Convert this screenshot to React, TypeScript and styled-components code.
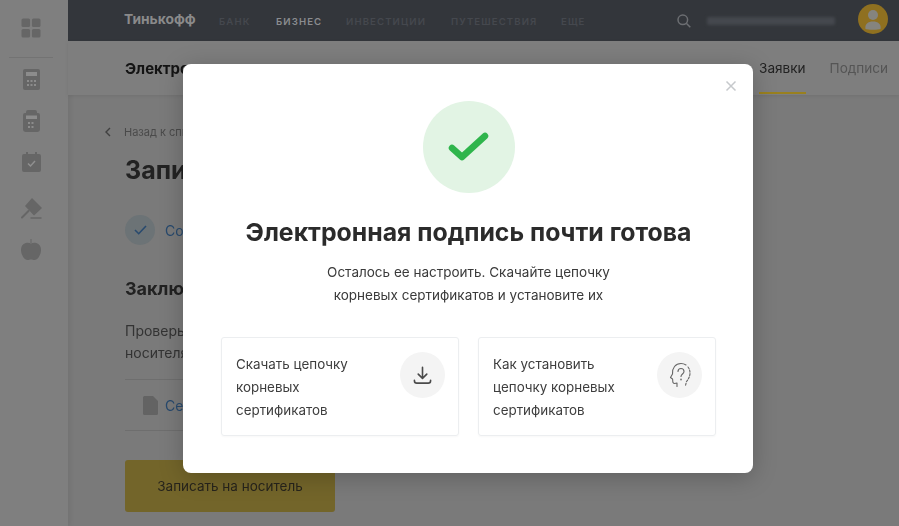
import React from 'react';
import styled, { createGlobalStyle } from 'styled-components';

const Global = createGlobalStyle`
  html, body { margin: 0; padding: 0; width: 100%; height: 100%; overflow: hidden; background: #7a7a7a; }
  #root { width: 100%; height: 100%; }
  * { box-sizing: border-box; }
`;

const Screen = styled.div`
  position: relative;
  width: 899px;
  height: 526px;
  overflow: hidden;
  font-family: Inter, "Liberation Sans", sans-serif;
`;

const Page = styled.div`
  display: flex;
  width: 899px;
  height: 526px;
  background: #7a7a7a;
  filter: blur(0.6px);
`;

const Sidebar = styled.aside`
  width: 68px;
  flex: none;
  background: #7f7f7f;
  box-shadow: 2px 0 5px rgba(0, 0, 0, 0.07);
  display: flex;
  flex-direction: column;
  align-items: center;
  padding: 18px 6px 0 0;
  color: #666;
`;

const SideSlot = styled.div<{ $h: number }>`
  height: ${(p) => p.$h}px;
  width: 100%;
  display: flex;
  align-items: center;
  justify-content: center;
  flex: none;
`;

const SideDivider = styled.hr`
  width: 44px;
  height: 1px;
  margin: 19px 0 1px;
  border: 0;
  background: #737373;
  flex: none;
`;

const Main = styled.div`
  flex: 1;
  min-width: 0;
  display: flex;
  flex-direction: column;
`;

const TopBar = styled.header`
  height: 41px;
  flex: none;
  background: #33363b;
  display: flex;
  align-items: center;
  padding: 0 11px 0 56px;
`;

const Brand = styled.span`
  font-size: 13.8px;
  font-weight: 700;
  color: #8a8a8a;
  width: 95px;
  flex: none;
  margin-top: -3px;
`;

const NavItem = styled.span<{ $active?: boolean; $w: number }>`
  font-size: 9.6px;
  font-weight: 600;
  letter-spacing: 1.1px;
  margin-top: 1px;
  color: ${(p) => (p.$active ? '#8a8c8f' : '#45484e')};
  width: ${(p) => p.$w}px;
  flex: none;
  white-space: nowrap;
`;

const TopRight = styled.div`
  margin-left: auto;
  display: flex;
  align-items: center;
  gap: 16px;
`;

const Blurred = styled.div`
  width: 128px;
  height: 8px;
  border-radius: 2px;
  background: #45484e;
  filter: blur(1.5px);
`;

const Avatar = styled.div`
  width: 30px;
  height: 30px;
  border-radius: 50%;
  background: #8f7020;
  display: flex;
  align-items: center;
  justify-content: center;
  margin: 0 0 3px 7px;
  overflow: hidden;
`;

const SubBar = styled.div`
  height: 54px;
  flex: none;
  background: #7e7e7e;
  box-shadow: 0 1px 4px rgba(0, 0, 0, 0.08);
  display: flex;
  align-items: stretch;
  justify-content: space-between;
  padding: 0 11px 0 57px;
`;

const SubTitle = styled.div`
  font-size: 15px;
  font-weight: 700;
  color: #141414;
  padding-top: 18px;
`;

const Tabs = styled.nav`
  display: flex;
  gap: 24px;
`;

const Tab = styled.div<{ $active?: boolean }>`
  font-size: 13.55px;
  padding-top: 19px;
  color: ${(p) => (p.$active ? '#222' : '#555')};
  border-bottom: 2px solid ${(p) => (p.$active ? '#99801f' : 'transparent')};
  height: 53px;
`;

const Content = styled.div`
  padding: 29px 0 0 57px;
  display: flex;
  flex-direction: column;
  align-items: flex-start;
`;

const Back = styled.div`
  display: flex;
  align-items: center;
  gap: 13px;
  margin-left: -20px;
  height: 16px;
  font-size: 11px;
  color: #4a4a4a;
`;

const H1 = styled.h1`
  margin: 13px 0 0;
  font-size: 25px;
  line-height: 34px;
  font-weight: 700;
  color: #222;
`;

const Step = styled.div`
  display: flex;
  align-items: center;
  gap: 10px;
  margin-top: 28px;
  font-size: 14px;
  color: #284a6e;
`;

const StepCircle = styled.div`
  width: 30px;
  height: 30px;
  border-radius: 50%;
  background: #6c7376;
  display: flex;
  align-items: center;
  justify-content: center;
`;

const H2 = styled.h2`
  margin: 31px 0 0;
  font-size: 18px;
  line-height: 26px;
  font-weight: 700;
  color: #222;
`;

const Para = styled.p`
  margin: 18px 0 0;
  font-size: 14px;
  line-height: 22px;
  color: #333;
`;

const FileRow = styled.div`
  width: 250px;
  height: 52px;
  margin-top: 15px;
  border-top: 1px solid #6e6e6e;
  border-bottom: 1px solid #6e6e6e;
  display: flex;
  align-items: center;
  gap: 7px;
  padding-left: 18px;
  font-size: 14px;
  color: #284a6e;
`;

const PrimaryButton = styled.div`
  width: 210px;
  height: 52px;
  margin-top: 29px;
  border-radius: 3px;
  background: #73652a;
  display: flex;
  align-items: center;
  justify-content: center;
  font-size: 13.5px;
  color: #27241c;
`;

const Modal = styled.div`
  position: absolute;
  left: 183px;
  top: 64px;
  width: 570px;
  height: 409px;
  border-radius: 8px;
  background: #fff;
  box-shadow: 0 4px 24px rgba(0, 0, 0, 0.22);
  display: flex;
  flex-direction: column;
  align-items: center;
  padding: 37px 37px 0 38px;
  filter: blur(0.25px);
`;

const Close = styled.div`
  position: absolute;
  top: 15px;
  right: 15px;
  width: 14px;
  height: 14px;
  display: flex;
`;

const SuccessCircle = styled.div`
  width: 92px;
  height: 92px;
  border-radius: 50%;
  background: #e2f4e4;
  display: flex;
  align-items: center;
  justify-content: center;
  flex: none;
`;

const Title = styled.h2`
  margin: 22px 0 0;
  font-size: 24.8px;
  line-height: 34px;
  font-weight: 700;
  color: #2b2b2b;
  white-space: nowrap;
`;

const Lead = styled.p`
  margin: 12px 0 0;
  font-size: 13.5px;
  line-height: 23px;
  color: #3a3a3a;
  text-align: center;
`;

const Cards = styled.div`
  display: flex;
  gap: 19px;
  margin-top: 30px;
  width: 100%;
`;

const Card = styled.div`
  flex: 1;
  height: 99px;
  border-radius: 3px;
  border: 1px solid #eceef0;
  box-shadow: 0 1px 2px rgba(0, 0, 0, 0.03);
  display: flex;
  justify-content: space-between;
  padding: 15px 13px 0 14px;
`;

const CardText = styled.div`
  font-size: 13.4px;
  line-height: 23px;
  color: #3d3d3d;
`;

const CardIcon = styled.div`
  width: 45px;
  height: 46px;
  margin-top: -1px;
  border-radius: 50%;
  background: #f4f4f4;
  display: flex;
  align-items: center;
  justify-content: center;
  flex: none;
`;

const Ico = styled.svg`
  display: block;
  flex: none;
`;

export default function App() {
  return (
    <Screen>
      <Global />
      <Page>
        <Sidebar>
          <SideSlot $h={20}>
            <Ico width="20" height="20" viewBox="0 0 20 20" fill="currentColor">
              <rect x="0.5" y="0.5" width="8.6" height="8.6" rx="1.6" />
              <rect x="10.9" y="0.5" width="8.6" height="8.6" rx="1.6" />
              <rect x="0.5" y="10.9" width="8.6" height="8.6" rx="1.6" />
              <rect x="10.9" y="10.9" width="8.6" height="8.6" rx="1.6" />
            </Ico>
          </SideSlot>
          <SideDivider />
          <SideSlot $h={41}>
            <Ico width="17" height="21" viewBox="0 0 17 21">
              <rect width="17" height="21" rx="2" fill="currentColor" />
              <rect x="3" y="3" width="11" height="4" fill="#8c8c8c" />
              <g fill="#8c8c8c">
                <rect x="4" y="11" width="2" height="2" /><rect x="7.5" y="11" width="2" height="2" /><rect x="11" y="11" width="2" height="2" />
                <rect x="4" y="15" width="2" height="2" /><rect x="7.5" y="15" width="2" height="2" /><rect x="11" y="15" width="2" height="2" />
              </g>
            </Ico>
          </SideSlot>
          <SideSlot $h={41}>
            <Ico width="17" height="23" viewBox="0 0 17 23">
              <path d="M3 3a2 2 0 0 1 2-2h7a2 2 0 0 1 2 2v1h1a2 2 0 0 1 2 2v14a3 3 0 0 1-3 3H3a3 3 0 0 1-3-3V6a2 2 0 0 1 2-2h1z" fill="currentColor" />
              <rect x="3" y="6.5" width="11" height="3.5" fill="#8c8c8c" />
              <g fill="#8c8c8c">
                <rect x="5" y="13" width="2" height="2" /><rect x="8.500" y="13" width="2" height="2" />
                <rect x="5" y="17" width="2" height="2" /><rect x="8.500" y="17" width="2" height="2" />
              </g>
            </Ico>
          </SideSlot>
          <SideSlot $h={41}>
            <Ico width="19" height="20" viewBox="0 0 19 20">
              <path d="M2 2h2V0h2v2h7V0h2v2h2a2 2 0 0 1 2 2v14a2 2 0 0 1-2 2H2a2 2 0 0 1-2-2V4a2 2 0 0 1 2-2z" fill="currentColor" />
              <path d="M6 11.500l2.500 2.500 4.500-5" fill="none" stroke="#909090" strokeWidth="1.500" />
            </Ico>
          </SideSlot>
          <SideSlot $h={53}>
            <Ico width="21" height="21" viewBox="0 0 21 21">
              <path d="M11 0L21 10 13 17.500 4 8z" fill="currentColor" />
              <path d="M1 19.500L7.500 13" stroke="currentColor" strokeWidth="2" strokeLinecap="round" />
              <path d="M9.500 20h11" stroke="currentColor" strokeWidth="1.500" />
            </Ico>
          </SideSlot>
          <SideSlot $h={29}>
            <Ico width="20" height="21" viewBox="0 0 20 21" fill="currentColor">
              <path d="M10 4.500C7 2.800 0 3.500 0 11c0 5 3.500 10 6.500 10 1.500 0 2.300-.6 3.500-.6s2 .6 3.500.6C16.500 21 20 16 20 11c0-7.500-7-8.200-10-6.500z" />
              <path d="M9.500 4V0h1v4z" />
            </Ico>
          </SideSlot>
        </Sidebar>
        <Main>
          <TopBar>
            <Brand>Тинькофф</Brand>
            <NavItem $w={57}>БАНК</NavItem>
            <NavItem $w={70} $active>БИЗНЕС</NavItem>
            <NavItem $w={105}>ИНВЕСТИЦИИ</NavItem>
            <NavItem $w={110}>ПУТЕШЕСТВИЯ</NavItem>
            <NavItem $w={30}>ЕЩЕ</NavItem>
            <TopRight>
              <Ico width="14" height="14" viewBox="0 0 14 14" fill="none" stroke="#6c6e72" strokeWidth="1.500">
                <circle cx="5.800" cy="5.800" r="4.800" />
                <path d="M9.300 9.300l4 4" />
              </Ico>
              <Blurred />
              <Avatar>
                <Ico width="30" height="30" viewBox="0 0 30 30" fill="#85847e">
                  <circle cx="15" cy="11" r="5" />
                  <path d="M7.500 25c-1-5 2.500-7.500 7.500-7.500s8.500 2.500 7.500 7.500c-2 1-13 1-15 0z" />
                </Ico>
              </Avatar>
            </TopRight>
          </TopBar>
          <SubBar>
            <SubTitle>Электронная подпись</SubTitle>
            <Tabs>
              <Tab $active>Заявки</Tab>
              <Tab>Подписи</Tab>
            </Tabs>
          </SubBar>
          <Content>
            <Back>
              <Ico width="6" height="10" viewBox="0 0 6 10" fill="none" stroke="#404040" strokeWidth="1.400">
                <path d="M5 1L1 5l4 4" />
              </Ico>
              Назад к списку
            </Back>
            <H1>Запись подписи</H1>
            <Step>
              <StepCircle>
                <Ico width="13" height="10" viewBox="0 0 13 10" fill="none" stroke="#284a6e" strokeWidth="1.600">
                  <path d="M1 5l3.700 3.700L12 1" />
                </Ico>
              </StepCircle>
              Создание заявки
            </Step>
            <H2>Заключение</H2>
            <Para>
              Проверьте данные
              <br />
              носителя подписи
            </Para>
            <FileRow>
              <Ico width="15" height="19" viewBox="0 0 15 19">
                <path d="M1.500 0H10l5 5v12.500a1.500 1.500 0 0 1-1.500 1.500h-12A1.500 1.500 0 0 1 0 17.500v-16A1.500 1.500 0 0 1 1.500 0z" fill="#636363" />
              </Ico>
              Сертификат
            </FileRow>
            <PrimaryButton>Записать на носитель</PrimaryButton>
          </Content>
        </Main>
      </Page>
      <Modal>
        <Close>
          <Ico width="14" height="14" viewBox="0 0 14 14" fill="none" stroke="#c6c9cc" strokeWidth="1.500">
            <path d="M2.500 2.500l9 9M11.500 2.500l-9 9" />
          </Ico>
        </Close>
        <SuccessCircle>
          <Ico width="41" height="34" viewBox="0 0 41 34" fill="none" stroke="#2fb54c" strokeWidth="6.500" strokeLinecap="round" strokeLinejoin="round">
            <path d="M4 18l10 9L37 6" />
          </Ico>
        </SuccessCircle>
        <Title>Электронная подпись почти готова</Title>
        <Lead>
          Осталось ее настроить. Скачайте цепочку
          <br />
          корневых сертификатов и установите их
        </Lead>
        <Cards>
          <Card>
            <CardText>
              Скачать цепочку
              <br />
              корневых
              <br />
              сертификатов
            </CardText>
            <CardIcon>
              <Ico width="19" height="19" viewBox="0 0 20 20" fill="none" stroke="#4a4a4a" strokeWidth="1.700" strokeLinecap="round" strokeLinejoin="round">
                <path d="M10 1.500v11M5.500 8.500L10 13l4.500-4.500" />
                <path d="M1.500 15v.5c0 1.500 1 2.500 2.500 2.500h12c1.500 0 2.500-1 2.500-2.500V15" />
              </Ico>
            </CardIcon>
          </Card>
          <Card>
            <CardText>
              Как установить
              <br />
              цепочку корневых
              <br />
              сертификатов
            </CardText>
            <CardIcon>
              <Ico width="22" height="26" viewBox="0 0 22 26" fill="none" stroke="#666" strokeWidth="1.100" strokeLinecap="round" strokeLinejoin="round">
                <path d="M8 24.500v-3.500c-1.500 .5-3.500 .5-4-.5-.5-1 0-2.500-.5-3.500L1.500 15.500l2-3.500C3 6 6.500 1.500 12 1.500c2 0 3.500 .5 5 1.500" />
                <path d="M19 5c1.500 2 2 4 2 6 0 3.500-1.500 6-3.500 8.500l-1 4" strokeDasharray="2 1.500" />
                <path d="M9 9.500C9 7.500 10.500 6.500 12 6.500s3 1 3 3c0 2.500-3 2.500-3 5" />
                <path d="M12 17.300v.4" strokeWidth="1.500" />
              </Ico>
            </CardIcon>
          </Card>
        </Cards>
      </Modal>
    </Screen>
  );
}
